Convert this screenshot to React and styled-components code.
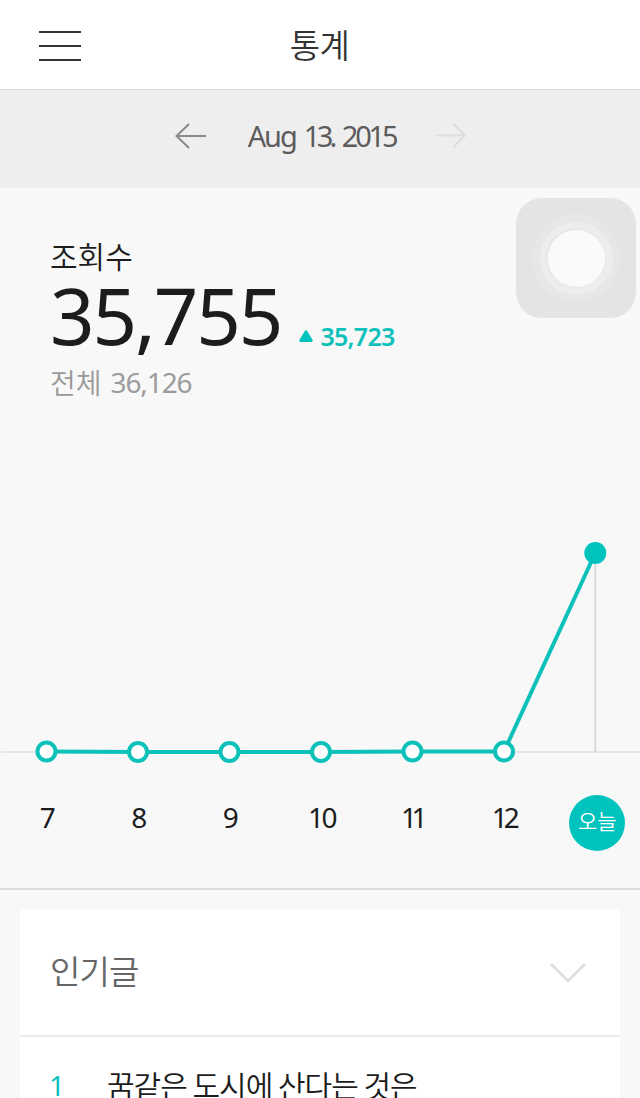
import React, { useState } from "react";
import styled, { createGlobalStyle } from "styled-components";

const GlobalStyle = createGlobalStyle`
  * {
    box-sizing: border-box;
  }

  body {
    margin: 0;
    background: #f8f8f8;
    font-family: "Noto Sans", "Noto Sans CJK KR", sans-serif;
    color: #1c1c1c;
  }

  button {
    display: flex;
    padding: 0;
    border: 0;
    background: none;
  }
`;

const Page = styled.div`
  width: 640px;
  height: 1098px;
  overflow: hidden;
  display: flex;
  flex-direction: column;
`;

// one line of text, every label on the page is built from it
const Text = styled.span`
  display: block;
  white-space: nowrap;
  font-size: ${(props) => props.$size}px;
  line-height: ${(props) => props.$line}px;
  font-weight: ${(props) => props.$weight || 400};
  letter-spacing: ${(props) => props.$spacing || 0}px;
  color: ${(props) => props.$color || "#1c1c1c"};
`;

const Korean = styled(Text)`
  font-family: "Noto Sans CJK KR", sans-serif;
`;

const Header = styled.header`
  flex: none;
  height: 90px;
  display: grid;
  grid-template-columns: 42px 1fr 42px;
  align-items: center;
  justify-items: center;
  padding: 2px 39px 0;
  background: #fff;
  border-bottom: 1px solid #d6d6d6;
`;

const Title = styled(Korean)`
  padding-bottom: 4px;
  margin-right: 1px;
`;

const DateBar = styled.nav`
  flex: none;
  height: 98px;
  display: flex;
  justify-content: space-between;
  align-items: flex-start;
  padding: 26px 174px 0 175px;
  background: #eee;
`;

const DateText = styled.div`
  display: flex;
  gap: 8px;
`;

const ArrowButton = styled.button`
  height: 40px;
  align-items: center;
`;

const Summary = styled.section`
  flex: none;
  position: relative;
  height: 352px;
  padding: 47px 50px 0;
`;

const CountRow = styled.div`
  display: flex;
  align-items: flex-end;
  height: 81px;
  margin-bottom: 6px;
`;

const Change = styled.div`
  display: flex;
  align-items: center;
  gap: 7px;
  margin-left: 18px;
  padding-bottom: 5px;
`;

const Total = styled.div`
  display: flex;
  gap: 9px;
`;

// floating system button over the content
const AssistiveTouch = styled.div`
  position: absolute;
  top: 10px;
  right: 4px;
  width: 120px;
  height: 120px;
  border-radius: 26px;
  background: #e4e4e4;
  display: flex;
  align-items: center;
  justify-content: center;
`;

const Ring = styled.div`
  width: ${(props) => props.$size}px;
  height: ${(props) => props.$size}px;
  border-radius: 50%;
  background: ${(props) => props.$color};
  display: flex;
  align-items: center;
  justify-content: center;
`;

const ChartSection = styled.section`
  flex: none;
  height: 350px;
  border-bottom: 2px solid #dcdcdc;
`;

const Chart = styled.svg`
  display: block;
`;

const Days = styled.div`
  display: grid;
  grid-template-columns: repeat(7, 91.5px);
  justify-items: center;
  align-items: center;
  height: 56px;
  margin: 15px 0 0 2px;
`;

// the margin evens out the spacing that trails the last digit
const Day = styled(Text)`
  padding-bottom: 12px;
  margin-right: ${(props) => (props.$spacing ? -1 - props.$spacing : 0)}px;
`;

const Today = styled.div`
  width: 56px;
  height: 56px;
  margin-left: 1px;
  padding-bottom: 6px;
  border-radius: 50%;
  background: #00c3bd;
  display: flex;
  align-items: center;
  justify-content: center;
`;

const Card = styled.section`
  flex: none;
  width: 600px;
  margin: 20px auto 0;
  background: #fff;
`;

const CardHeader = styled.div`
  height: 127px;
  display: flex;
  align-items: center;
  justify-content: space-between;
  padding: 0 34px 0 30px;
  border-bottom: 2px solid #ececec;
`;

const CardTitle = styled(Korean)`
  padding-bottom: 6px;
`;

const Post = styled.div`
  height: 100px;
  display: grid;
  grid-template-columns: 57px 1fr;
  align-items: start;
  padding: 27px 30px 0;
`;

const Rank = styled(Text)`
  padding-top: 1px;
  margin-left: -1px;
`;

const days = [
  { label: "7", x: 46.5, y: 211.5 },
  { label: "8", x: 138, y: 212 },
  { label: "9", x: 229.5, y: 212 },
  { label: "10", x: 321, y: 212, spacing: -2.5 },
  { label: "11", x: 412.5, y: 211.5, spacing: -5.5 },
  { label: "12", x: 504, y: 211.5, spacing: -4 },
  { label: "오늘", x: 595.3, y: 13 },
];

const posts = [{ rank: 1, title: "꿈같은 도시에 산다는 것은" }];

const MenuIcon = () => (
  <svg width="42" height="30" stroke="#333" strokeWidth="2">
    <path d="M0 1h42M0 15h42M0 29h42" />
  </svg>
);

const ArrowIcon = ({ next }) =>
  next ? (
    <svg width="30" height="26" fill="none" stroke="#dedede" strokeWidth="2">
      <path d="M0 12.500h29M17 .5l12 12L17 24.500" />
    </svg>
  ) : (
    <svg width="32" height="26" fill="none" stroke="#8a8a8a" strokeWidth="2">
      <path d="M31 13H1M14 1L1.500 13l12.500 12" />
    </svg>
  );

const StatsChart = () => {
  const last = days[days.length - 1];

  return (
    <Chart width="640" height="240" viewBox="0 0 640 240">
      <path d="M1 212H640" stroke="#e6e6e6" strokeWidth="2" />
      <path d={`M${last.x} 13V212`} stroke="#dadada" strokeWidth="2" />
      <polyline
        points={days.map((day) => `${day.x},${day.y}`).join(" ")}
        fill="none"
        stroke="#0cc1b9"
        strokeWidth="4"
      />
      {days.slice(0, -1).map((day) => (
        <circle
          key={day.label}
          cx={day.x}
          cy={day.y}
          r="9"
          fill="#fff"
          stroke="#0cc1b9"
          strokeWidth="4"
        />
      ))}
      <circle cx={last.x} cy={last.y} r="11" fill="#00c3bd" />
    </Chart>
  );
};

const App = () => {
  const [open, setOpen] = useState(true);

  return (
    <Page>
      <GlobalStyle />
      <Header>
        <button aria-label="menu">
          <MenuIcon />
        </button>
        <Title $size={33} $line={50} $weight={350} $color="#333" $spacing={-0.5}>
          통계
        </Title>
      </Header>

      <DateBar>
        <ArrowButton aria-label="previous day">
          <ArrowIcon />
        </ArrowButton>
        <DateText>
          <Text $size={29} $line={40} $color="#5c5c5c" $spacing={-2.1}>
            Aug
          </Text>
          <Text $size={29} $line={40} $color="#5c5c5c" $spacing={-3.6}>
            13.
          </Text>
          <Text $size={29} $line={40} $color="#5c5c5c" $spacing={-3.2}>
            2015
          </Text>
        </DateText>
        <ArrowButton aria-label="next day">
          <ArrowIcon next />
        </ArrowButton>
      </DateBar>

      <Summary>
        <Korean $size={30} $line={40} $weight={350}>
          조회수
        </Korean>
        <CountRow>
          <Text $size={78} $line={82} $spacing={-2.1}>
            35,755
          </Text>
          <Change>
            <svg width="14" height="12" fill="#00c3bd">
              <path d="M5.700 1.200Q7 -.8 8.300 1.200L13.500 9.800Q14.300 12 12 12H2Q-.3 12 .5 9.800Z" />
            </svg>
            <Text
              $size={25}
              $line={30}
              $weight={600}
              $color="#0cc1b9"
              $spacing={-0.7}
            >
              35,723
            </Text>
          </Change>
        </CountRow>
        <Total>
          <Korean $size={28} $line={40} $weight={350} $color="#999">
            전체
          </Korean>
          <Text $size={28} $line={40} $color="#9c9c9c" $spacing={-1.1}>
            36,126
          </Text>
        </Total>
        <AssistiveTouch>
          <Ring $size={88} $color="#e7e7e7">
            <Ring $size={73} $color="#ededed">
              <Ring $size={60} $color="#e8e8e8">
                <Ring $size={57} $color="#fafafa" />
              </Ring>
            </Ring>
          </Ring>
        </AssistiveTouch>
      </Summary>

      <ChartSection>
        <StatsChart />
        <Days>
          {days.slice(0, -1).map((day) => (
            <Day key={day.label} $size={28} $line={40} $spacing={day.spacing}>
              {day.label}
            </Day>
          ))}
          <Today>
            <Korean $size={21} $line={30} $weight={350} $color="#fff">
              오늘
            </Korean>
          </Today>
        </Days>
      </ChartSection>

      <Card>
        <CardHeader>
          <CardTitle
            $size={33}
            $line={48}
            $weight={350}
            $color="#666"
            $spacing={-0.9}
          >
            인기글
          </CardTitle>
          <button aria-label="toggle" onClick={() => setOpen(!open)}>
            <svg width="36" height="20" fill="none" stroke="#ddd" strokeWidth="2.5">
              <path d="M1 1l17 17L35 1" />
            </svg>
          </button>
        </CardHeader>
        {open &&
          posts.map((post) => (
            <Post key={post.rank}>
              <Rank $size={28} $line={40} $color="#0cc1b9">
                {post.rank}
              </Rank>
              <Korean $size={30} $line={40} $weight={350} $spacing={-1}>
                {post.title}
              </Korean>
            </Post>
          ))}
      </Card>
    </Page>
  );
};

export default App;
